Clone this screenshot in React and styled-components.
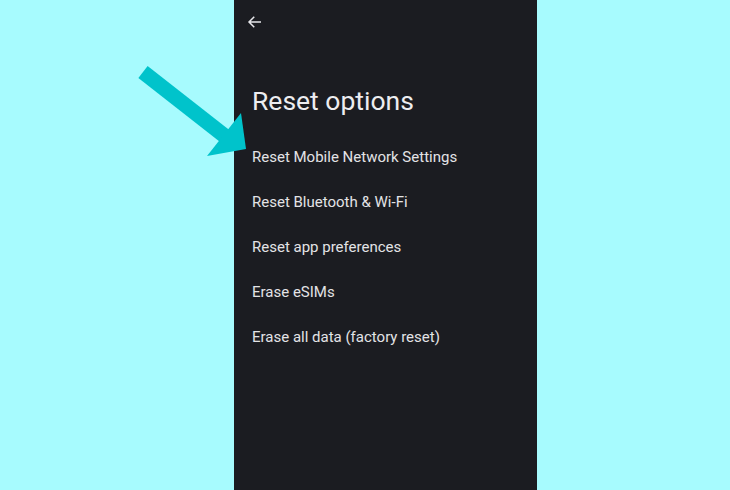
import styled, { createGlobalStyle } from "styled-components";

const Global = createGlobalStyle`
  html, body { margin: 0; padding: 0; }
  body {
    background: #a7fbfe;
    font-family: Roboto, "Noto Sans", sans-serif;
  }
`;

const Page = styled.div`
  position: relative;
  width: 730px;
  height: 490px;
  display: flex;
  justify-content: flex-start;
  overflow: hidden;
`;

const Phone = styled.div`
  margin-left: 234px;
  width: 303px;
  height: 490px;
  background: #1b1c21;
  box-sizing: border-box;
  padding: 13px 18px 0 18px;
  display: flex;
  flex-direction: column;
`;

const TopBar = styled.div`
  height: 18px;
  display: flex;
  align-items: center;
  margin-left: -6px;
  color: #e6e6ea;
`;

const Title = styled.h1`
  margin: 54px 0 0 0;
  font-size: 26.5px;
  font-weight: 400;
  color: #ededf0;
  line-height: 32px;
`;

const List = styled.ul`
  list-style: none;
  margin: 18px 0 0 0;
  padding: 0;
  display: flex;
  flex-direction: column;
`;

const Item = styled.li`
  height: 45px;
  line-height: 45px;
  font-size: 15px;
  color: #e3e3e6;
`;

const Arrow = styled.svg`
  position: absolute;
  left: 0;
  top: 0;
`;

const items = [
  "Reset Mobile Network Settings",
  "Reset Bluetooth & Wi-Fi",
  "Reset app preferences",
  "Erase eSIMs",
  "Erase all data (factory reset)",
];

export default function App() {
  return (
    <>
      <Global />
      <Page>
        <Phone>
          <TopBar>
            <svg width="18" height="18" viewBox="0 0 24 24" fill="none" stroke="currentColor" strokeWidth="2">
              <path d="M20 12H5M11 5l-7 7 7 7" />
            </svg>
          </TopBar>
          <Title>Reset options</Title>
          <List>
            {items.map((t) => (
              <Item key={t}>{t}</Item>
            ))}
          </List>
        </Phone>
        <Arrow width="730" height="490" viewBox="0 0 730 490">
          <line x1="143" y1="72" x2="226" y2="137" stroke="#00c3cb" strokeWidth="15" />
          <polygon points="241,113 207,156 246,149" fill="#00c3cb" />
        </Arrow>
      </Page>
    </>
  );
}
